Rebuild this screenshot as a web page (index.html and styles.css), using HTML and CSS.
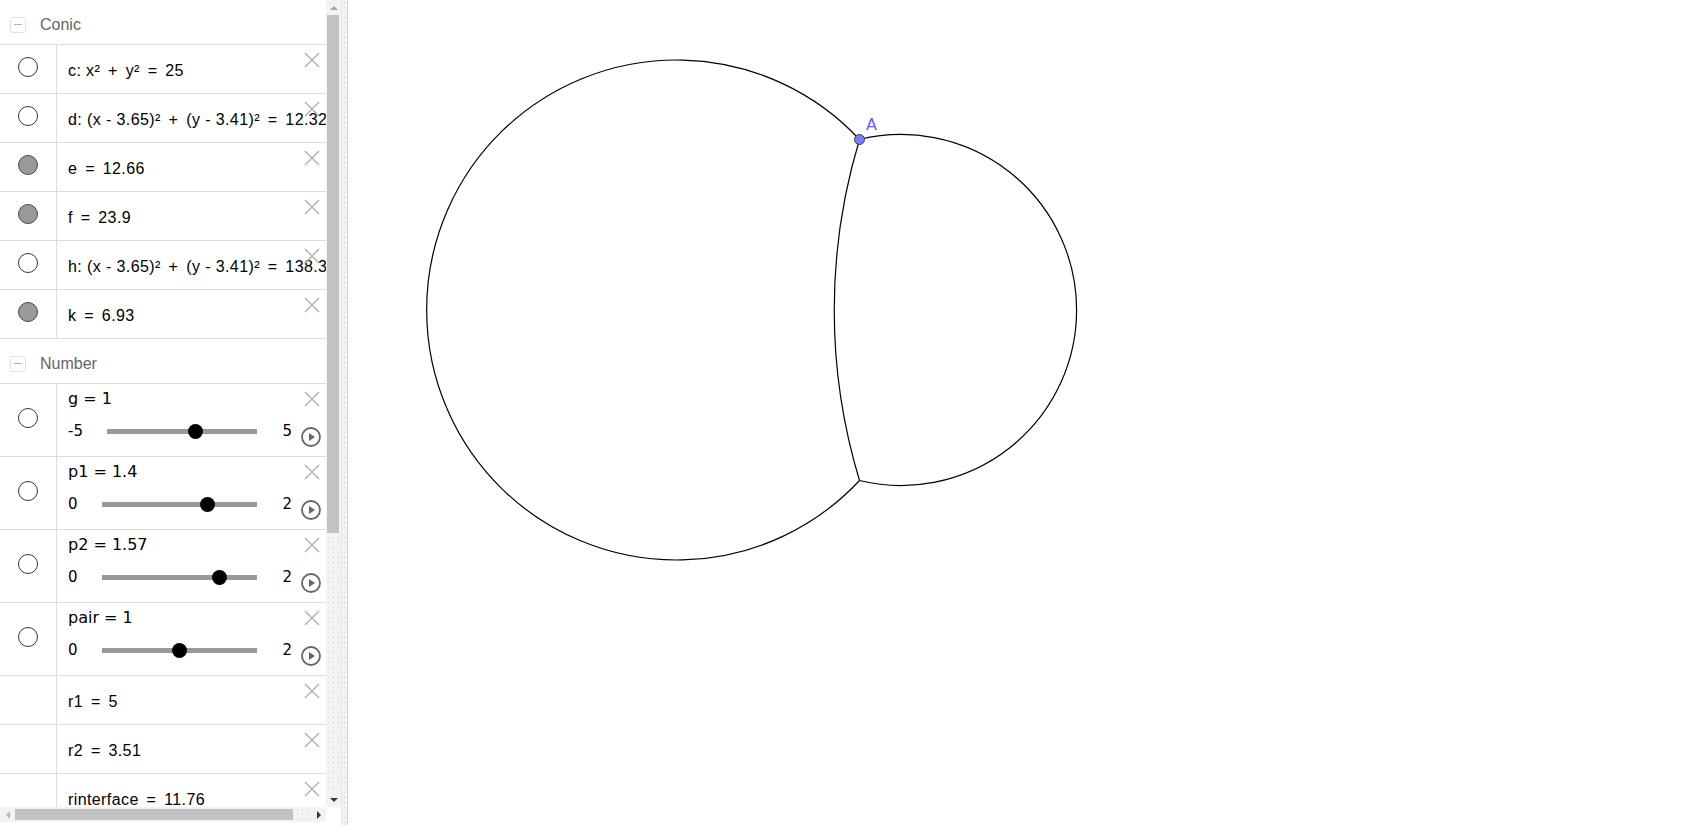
FILE: index.html
```html
<!DOCTYPE html>
<html>
<head>
<meta charset="utf-8">
<title>Algebra</title>
<link rel="stylesheet" href="styles.css">
</head>
<body>
<div class="app">
  <div class="algebra">
    <div class="av-grid">
      <div class="viewport">
        <div class="list">
          <div class="group-header"><span class="collapse"></span><span class="group-title">Conic</span></div>

          <div class="row text-row">
            <div class="marble-cell"><span class="marble"></span></div>
            <div class="cell">c: x² <span class="op">+</span> y² <span class="op">=</span> 25</div>
            <svg class="del" viewBox="0 0 16 16"><path d="M1 1L15 15M15 1L1 15"/></svg>
          </div>
          <div class="row text-row">
            <div class="marble-cell"><span class="marble"></span></div>
            <div class="cell">d: (x - 3.65)² <span class="op">+</span> (y - 3.41)² <span class="op">=</span> 12.32</div>
            <svg class="del" viewBox="0 0 16 16"><path d="M1 1L15 15M15 1L1 15"/></svg>
          </div>
          <div class="row text-row">
            <div class="marble-cell"><span class="marble on"></span></div>
            <div class="cell">e <span class="op">=</span> 12.66</div>
            <svg class="del" viewBox="0 0 16 16"><path d="M1 1L15 15M15 1L1 15"/></svg>
          </div>
          <div class="row text-row">
            <div class="marble-cell"><span class="marble on"></span></div>
            <div class="cell">f <span class="op">=</span> 23.9</div>
            <svg class="del" viewBox="0 0 16 16"><path d="M1 1L15 15M15 1L1 15"/></svg>
          </div>
          <div class="row text-row">
            <div class="marble-cell"><span class="marble"></span></div>
            <div class="cell">h: (x - 3.65)² <span class="op">+</span> (y - 3.41)² <span class="op">=</span> 138.3</div>
            <svg class="del" viewBox="0 0 16 16"><path d="M1 1L15 15M15 1L1 15"/></svg>
          </div>
          <div class="row text-row">
            <div class="marble-cell"><span class="marble on"></span></div>
            <div class="cell">k <span class="op">=</span> 6.93</div>
            <svg class="del" viewBox="0 0 16 16"><path d="M1 1L15 15M15 1L1 15"/></svg>
          </div>

          <div class="group-header"><span class="collapse"></span><span class="group-title">Number</span></div>

          <div class="row slider-row">
            <div class="marble-cell"><span class="marble"></span></div>
            <div class="cell">
              <div class="s-label">g = 1</div>
              <div class="s-line"><span class="s-min">-5</span><span class="track"><span class="knob" style="--v:0.6"></span></span><span class="s-max">5</span></div>
            </div>
            <svg class="del" viewBox="0 0 16 16"><path d="M1 1L15 15M15 1L1 15"/></svg>
            <svg class="play" viewBox="0 0 20 20"><circle cx="10" cy="10" r="9"/><path d="M8 6L14 10L8 14Z"/></svg>
          </div>
          <div class="row slider-row">
            <div class="marble-cell"><span class="marble"></span></div>
            <div class="cell">
              <div class="s-label">p1 = 1.4</div>
              <div class="s-line"><span class="s-min">0</span><span class="track"><span class="knob" style="--v:0.7"></span></span><span class="s-max">2</span></div>
            </div>
            <svg class="del" viewBox="0 0 16 16"><path d="M1 1L15 15M15 1L1 15"/></svg>
            <svg class="play" viewBox="0 0 20 20"><circle cx="10" cy="10" r="9"/><path d="M8 6L14 10L8 14Z"/></svg>
          </div>
          <div class="row slider-row">
            <div class="marble-cell"><span class="marble"></span></div>
            <div class="cell">
              <div class="s-label">p2 = 1.57</div>
              <div class="s-line"><span class="s-min">0</span><span class="track"><span class="knob" style="--v:0.785"></span></span><span class="s-max">2</span></div>
            </div>
            <svg class="del" viewBox="0 0 16 16"><path d="M1 1L15 15M15 1L1 15"/></svg>
            <svg class="play" viewBox="0 0 20 20"><circle cx="10" cy="10" r="9"/><path d="M8 6L14 10L8 14Z"/></svg>
          </div>
          <div class="row slider-row">
            <div class="marble-cell"><span class="marble"></span></div>
            <div class="cell">
              <div class="s-label">pair = 1</div>
              <div class="s-line"><span class="s-min">0</span><span class="track"><span class="knob" style="--v:0.5"></span></span><span class="s-max">2</span></div>
            </div>
            <svg class="del" viewBox="0 0 16 16"><path d="M1 1L15 15M15 1L1 15"/></svg>
            <svg class="play" viewBox="0 0 20 20"><circle cx="10" cy="10" r="9"/><path d="M8 6L14 10L8 14Z"/></svg>
          </div>

          <div class="row text-row">
            <div class="marble-cell"></div>
            <div class="cell">r1 <span class="op">=</span> 5</div>
            <svg class="del" viewBox="0 0 16 16"><path d="M1 1L15 15M15 1L1 15"/></svg>
          </div>
          <div class="row text-row">
            <div class="marble-cell"></div>
            <div class="cell">r2 <span class="op">=</span> 3.51</div>
            <svg class="del" viewBox="0 0 16 16"><path d="M1 1L15 15M15 1L1 15"/></svg>
          </div>
          <div class="row text-row">
            <div class="marble-cell"></div>
            <div class="cell">rinterface <span class="op">=</span> 11.76</div>
            <svg class="del" viewBox="0 0 16 16"><path d="M1 1L15 15M15 1L1 15"/></svg>
          </div>
        </div>
      </div>
      <div class="vscroll">
        <span class="arrow-box"><span class="arr up dim"></span></span>
        <span class="vthumb"></span>
        <span class="vtrack"></span>
        <span class="arrow-box"><span class="arr down"></span></span>
      </div>
      <div class="hscroll">
        <span class="arrow-box h"><span class="arr left dim"></span></span>
        <span class="hthumb"></span>
        <span class="htrack"></span>
        <span class="arrow-box h"><span class="arr right"></span></span>
      </div>
      <div class="corner"></div>
    </div>
    <div class="splitter"></div>
  </div>
  <div class="canvas">
    <svg class="graphics" viewBox="348 0 1358 825" width="1358" height="825">
      <path class="curve" d="M 859.5 139.5 A 250 250 0 1 0 859.5 480.5"/>
      <path class="curve" d="M 859.5 139.5 A 175.5 175.5 0 1 1 859.5 480.5"/>
      <path class="curve" d="M 859.5 139.5 A 588 588 0 0 0 859.5 480.5"/>
      <circle class="pt" cx="859.5" cy="139.5" r="5"/>
      <text class="pt-label" x="866" y="129.5">A</text>
    </svg>
  </div>
</div>
</body>
</html>
```
FILE: styles.css
```css
* { box-sizing: border-box; }
html, body { margin: 0; padding: 0; }
body {
  width: 1706px;
  height: 825px;
  overflow: hidden;
  background: #fff;
  font-family: "Liberation Sans", Arial, sans-serif;
  color: #000;
}
.app { display: flex; height: 825px; }
.algebra { display: flex; flex: none; width: 348px; height: 825px; }
.av-grid {
  display: grid;
  grid-template-columns: 326px 15px;
  grid-template-rows: 807px 15px;
  align-content: start;
}
.viewport { overflow: hidden; position: relative; }
.list { width: 326px; }

.group-header {
  height: 45px;
  display: flex;
  align-items: center;
  padding: 5px 0 0 10px;
  border-bottom: 1px solid #dcdcdc;
}
.collapse {
  width: 16px;
  height: 16px;
  border: 1px solid #e0e0e0;
  border-radius: 3px;
  display: flex;
  align-items: center;
  justify-content: center;
  margin-right: 14px;
}
.collapse::before {
  content: "";
  width: 8px;
  height: 1.5px;
  background: #b0b0b0;
}
.group-title { color: #666; font-size: 16px; }

.row {
  display: flex;
  position: relative;
  height: 49px;
  border-bottom: 1px solid #dcdcdc;
}
.slider-row { height: 73px; }
.marble-cell {
  flex: none;
  width: 57px;
  border-right: 1px solid #dcdcdc;
  display: flex;
  align-items: center;
  justify-content: center;
  padding-bottom: 4px;
}
.marble {
  width: 20px;
  height: 20px;
  border-radius: 50%;
  border: 1px solid #333;
  background: #fff;
}
.marble.on { background: #999; border-color: #4a4a4a; }
.cell { flex: 1; min-width: 0; padding-left: 11px; white-space: nowrap; }
.text-row .cell {
  padding-top: 16px;
  font-size: 16px;
  line-height: 20px;
  letter-spacing: 0.4px;
}
.op { margin: 0 3px; }

.del {
  position: absolute;
  left: 304px;
  top: 7px;
  width: 16px;
  height: 16px;
  fill: none;
  stroke: #b4b4b4;
  stroke-width: 1.5;
}
.play {
  position: absolute;
  left: 301px;
  top: 43px;
  width: 20px;
  height: 20px;
}
.play circle { fill: #fff; stroke: #666; stroke-width: 1.8; }
.play path { fill: #666; }

.s-label {
  font-family: "DejaVu Sans", sans-serif;
  font-size: 16px;
  line-height: 20px;
  padding-top: 5px;
}
.s-line {
  display: flex;
  align-items: center;
  width: 224px;
  height: 16px;
  margin-top: 14px;
  font-family: "DejaVu Sans", sans-serif;
  font-size: 15px;
}
.track {
  position: relative;
  flex: 1;
  height: 5px;
  background: #999;
  margin: 0 25px 0 24px;
}
.knob {
  position: absolute;
  top: 50%;
  width: 15px;
  height: 15px;
  margin-top: -7.5px;
  border-radius: 50%;
  background: #000;
  left: calc((100% - 15px) * var(--v));
}

.vscroll, .hscroll, .splitter {
  background-color: #f3f3f3;
  background-image: radial-gradient(circle, #cfcfcf 0.6px, transparent 1px);
  background-size: 5px 5px;
}
.vscroll { display: flex; flex-direction: column; }
.hscroll { display: flex; flex-direction: row; }
.arrow-box {
  flex: none;
  width: 15px;
  height: 15px;
  display: flex;
  align-items: center;
  justify-content: center;
  background: #f3f3f3;
}
.arr { width: 0; height: 0; border: 4px solid transparent; }
.arr.up { border-bottom-color: #333; border-top-width: 0; }
.arr.down { border-top-color: #333; border-bottom-width: 0; }
.arr.left { border-right-color: #333; border-left-width: 0; }
.arr.right { border-left-color: #333; border-right-width: 0; }
.arr.up.dim { border-bottom-color: #a8a8a8; }
.arr.left.dim { border-right-color: #b8b8b8; }
.vthumb { flex: none; height: 518px; margin: 0 2px 0 1px; background: #c2c2c2; }
.vtrack { flex: 1; }
.hthumb { flex: none; width: 278px; margin: 2px 0; background: #c2c2c2; }
.htrack { flex: 1; }
.corner { background: #fff; }
.splitter {
  flex: none;
  width: 7px;
  height: 825px;
  border-left: 1px solid #e6e6e6;
  border-right: 1px solid #d2d2d2;
}

.canvas { flex: 1; height: 825px; background: #fff; }
.graphics { display: block; }
.curve { fill: none; stroke: #000; stroke-width: 1.2; }
.pt { fill: #7d7dff; stroke: #3a3a3a; stroke-width: 1; }
.pt-label {
  font-family: "DejaVu Sans", sans-serif;
  font-size: 16px;
  fill: #6262f2;
}
```
